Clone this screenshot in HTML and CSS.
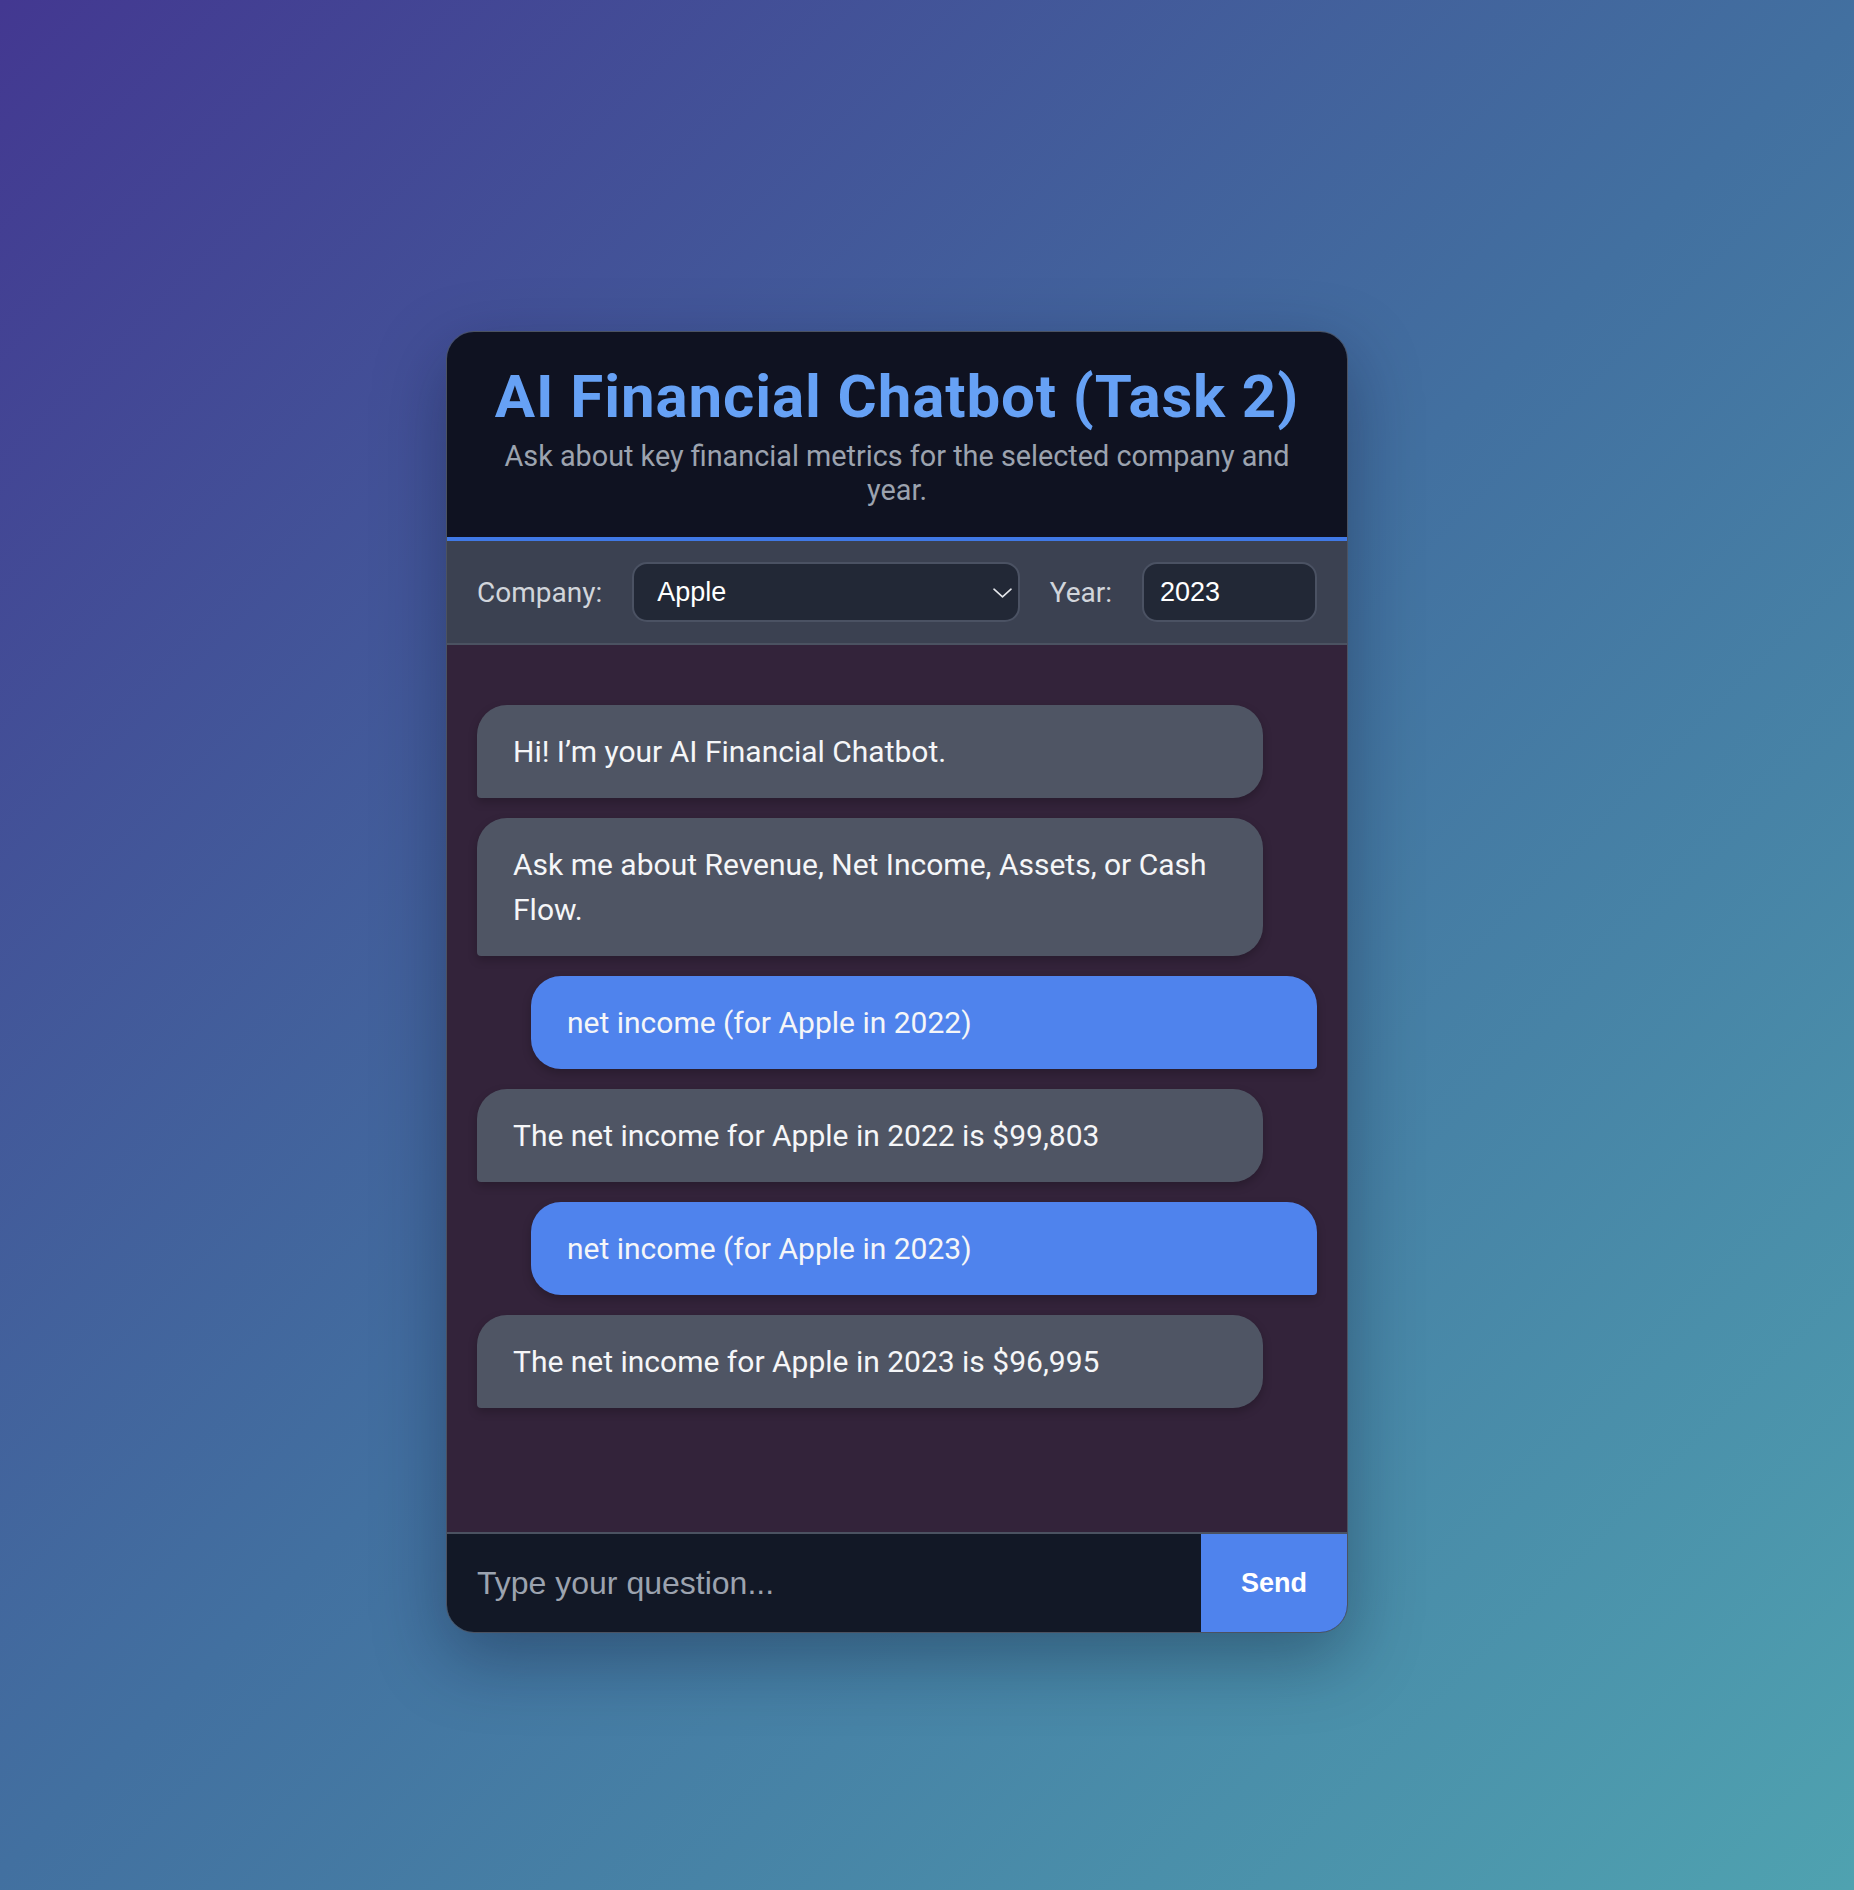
FILE: index.html
```html
<!DOCTYPE html>
<html lang="en">
<head>
<meta charset="utf-8">
<title>AI Financial Chatbot</title>
<link rel="stylesheet" href="styles.css">
</head>
<body>
<div class="page">
  <div class="card">
    <header class="header">
      <h1 class="title">AI Financial Chatbot (Task 2)</h1>
      <p class="subtitle">Ask about key financial metrics for the selected company and year.</p>
    </header>
    <div class="controls">
      <label class="label" for="company">Company:</label>
      <div class="select-wrap">
        <select id="company" class="select">
          <option>Apple</option>
          <option>Microsoft</option>
          <option>Tesla</option>
        </select>
        <svg class="chevron" width="19" height="10" viewBox="0 0 19 10" aria-hidden="true"><path d="M1 1.2 L9.5 8.8 L18 1.2" fill="none" stroke="#e5e7eb" stroke-width="1.6" stroke-linecap="round" stroke-linejoin="round"/></svg>
      </div>
      <label class="label" for="year">Year:</label>
      <input id="year" class="year" type="text" value="2023">
    </div>
    <div class="chat">
      <div class="msg bot">Hi! I’m your AI Financial Chatbot.</div>
      <div class="msg bot">Ask me about Revenue, Net Income, Assets, or Cash Flow.</div>
      <div class="msg user">net income (for Apple in 2022)</div>
      <div class="msg bot">The net income for Apple in 2022 is $99,803</div>
      <div class="msg user">net income (for Apple in 2023)</div>
      <div class="msg bot">The net income for Apple in 2023 is $96,995</div>
    </div>
    <div class="composer">
      <input class="question" type="text" placeholder="Type your question...">
      <button class="send" type="button">Send</button>
    </div>
  </div>
</div>
</body>
</html>
```
FILE: styles.css
```css
html, body {
  margin: 0;
  min-height: 100%;
}

body {
  min-height: 100vh;
  background: linear-gradient(135deg, #433891 0%, #4270a0 50%, #4fa2b0 100%);
  font-family: Roboto, "Liberation Sans", Arial, sans-serif;
}

.page {
  box-sizing: border-box;
  min-height: 100vh;
  padding: 331px 0 0 446px;
}

.card {
  width: 900px;
  border: 1px solid #4b5261;
  border-radius: 28px;
  overflow: hidden;
  box-shadow: 0 25px 70px rgba(10, 15, 40, 0.35);
}

.header {
  background: #0f1221;
  padding: 30px 30px;
  text-align: center;
  border-bottom: 4px solid #4079e6;
}

.title {
  margin: 0;
  font-family: Roboto, sans-serif;
  font-weight: 700;
  font-size: 60px;
  line-height: 69px;
  letter-spacing: 0.9px;
  color: #66a1f5;
}

.subtitle {
  margin: 8px 0 0;
  font-size: 28.8px;
  line-height: 34px;
  color: #9ca3af;
}

.controls {
  display: flex;
  align-items: center;
  gap: 30px;
  padding: 21px 30px;
  background: #3b4151;
  border-bottom: 2px solid #4b5261;
}

.label {
  font-family: Roboto, sans-serif;
  font-size: 28px;
  color: #d1d5db;
}

.select-wrap {
  position: relative;
  flex: 1;
  display: flex;
}

.select,
.year {
  box-sizing: border-box;
  height: 60px;
  background: #222836;
  border: 2px solid #4b5263;
  border-radius: 15px;
  color: #ffffff;
  font-family: "Liberation Sans", Arial, sans-serif;
  font-size: 27px;
  outline: none;
}

.select {
  flex: 1;
  -webkit-appearance: none;
  appearance: none;
  padding: 0 40px 0 23px;
}

.chevron {
  position: absolute;
  right: 8px;
  top: 26px;
  pointer-events: none;
}

.year {
  width: 175px;
  padding: 0 16px;
}

.chat {
  box-sizing: border-box;
  height: 889px;
  padding: 60px 30px 30px;
  display: flex;
  flex-direction: column;
  gap: 20px;
  background: #33233a;
  border-bottom: 2px solid #4b5261;
  overflow-y: auto;
}

.msg {
  width: 85%;
  padding: 24px 36px;
  font-size: 30px;
  line-height: 45px;
  color: #f5f6f8;
  box-shadow: 0 4px 10px rgba(0, 0, 0, 0.22);
  flex-shrink: 0;
}

.bot {
  align-self: flex-start;
  background: #4f5564;
  border-radius: 30px 30px 30px 4px;
}

.user {
  align-self: flex-end;
  background: #4f83ed;
  border-radius: 30px 30px 4px 30px;
}

.composer {
  display: flex;
  height: 98px;
  background: #121826;
}

.question {
  flex: 1;
  min-width: 0;
  background: transparent;
  border: none;
  outline: none;
  padding: 0 30px;
  color: #ffffff;
  font-family: "Liberation Sans", Arial, sans-serif;
  font-size: 32px;
}

.question::placeholder {
  color: #9ca3af;
}

.send {
  width: 146px;
  border: none;
  background: #4f83ed;
  color: #ffffff;
  font-family: "Liberation Sans", Arial, sans-serif;
  font-weight: 700;
  font-size: 27px;
  cursor: pointer;
}
```
